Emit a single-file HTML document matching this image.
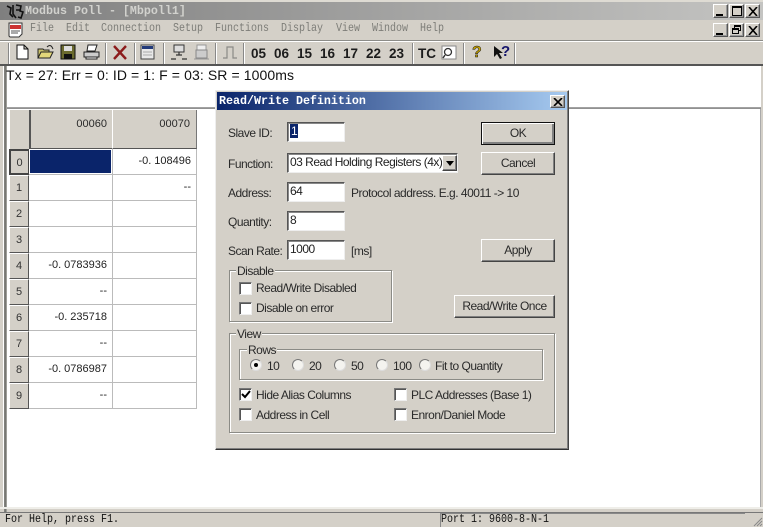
<!DOCTYPE html>
<html><head><meta charset="utf-8"><style>
html,body{margin:0;padding:0;width:763px;height:527px;overflow:hidden;background:#d4d0c8}
body{position:relative;font-family:"Liberation Sans",sans-serif;font-size:12px;color:#2a2a2a}
#w{position:absolute;left:0;top:0;width:763px;height:527px;filter:blur(.3px);letter-spacing:-.5px}
#w div,#w svg{position:absolute;box-sizing:border-box}
.t{white-space:nowrap;line-height:14px}
.m{font-family:"Liberation Mono",monospace;font-size:10px;color:#7d7d78;top:23px;line-height:14px;white-space:nowrap;letter-spacing:0;transform:scaleY(1.2)}
.btn{background:#d4d0c8;border:1px solid;border-color:#fff #444 #444 #fff;box-shadow:inset -1px -1px 0 #808080;text-align:center}
.wb{width:15px;height:14px;background:#d4d0c8;border:1px solid;border-color:#fff #555 #555 #fff;box-shadow:inset -1px -1px 0 #999}
.in{background:#fff;border:1px solid;border-color:#555 #eee #eee #555;box-shadow:inset 1px 1px 0 #888;left:287px;width:58px;height:20px;padding:1px 0 0 2px;line-height:15px;color:#222;white-space:nowrap;overflow:hidden}
.cb{width:13px;height:13px;background:#fff;border:1px solid;border-color:#777 #eee #eee #777;box-shadow:inset 1px 1px 0 #555}
.rd{width:12px;height:12px;border-radius:50%;background:#f4f3ef;border:1px solid;border-color:#777 #ddd #ddd #777;top:359px}
.g{border:1px solid #8b8b86;box-shadow:1px 1px 0 #fff,inset 1px 1px 0 #fff}
.lg{background:#d4d0c8;padding:0 1px;line-height:12px;white-space:nowrap}
.c{background:#fff;border-right:1px solid #bbb;border-bottom:1px solid #bbb;text-align:right;font-size:11px;line-height:25px;color:#222;padding-right:5px;letter-spacing:0}
.h{background:#d4d0c8;left:9px;width:20px;text-align:center;font-size:11px;line-height:25px;height:26px;border-bottom:1px solid #555;border-right:1px solid #555;border-top:1px solid #fff;border-left:1px solid #fff;color:#333;letter-spacing:0}
.sep{width:2px;top:43px;height:21px;border-left:1px solid #888;border-right:1px solid #fff}
.n{font-weight:bold;font-size:13.5px;top:46px;line-height:15px;color:#1c1c1c;letter-spacing:0}
.d{letter-spacing:3px}
</style></head><body><div id="w">

<div style="left:0;top:0;width:763px;height:2px;background:#dedbd3"></div>
<div style="left:0;top:2px;width:763px;height:18px;background:linear-gradient(90deg,#7f7f7f,#c4c4c2)"></div>
<svg style="left:5px;top:3px" width="20" height="17" viewBox="0 0 20 17"><path d="M2 3l4 2-1 6 3 3M8 2v9l3 4M11 2l5 1-1 5 3 1-2 6-3-1M11 7h4" fill="none" stroke="#111" stroke-width="1.6"/></svg>
<div class="t" style="left:25px;top:3px;font:bold 11.67px/16px 'Liberation Mono',monospace;color:#d2d2ce;letter-spacing:0">Modbus Poll - [Mbpoll1]</div>
<div class="wb" style="left:713px;top:4px"><div style="left:2px;top:9px;width:7px;height:2px;background:#000"></div></div>
<div class="wb" style="left:729px;top:4px"><div style="left:2px;top:1px;width:10px;height:10px;border:1px solid #000;border-top-width:2px"></div></div>
<div class="wb" style="left:745px;top:4px"><svg style="left:2px;top:2px" width="10" height="9"><path d="M1 0l8 9M9 0L1 9" stroke="#000" stroke-width="1.6"/></svg></div>

<svg style="left:8px;top:22px" width="16" height="16"><path d="M1 1h13v11l-3 3H2l-1-1z" fill="#fff" stroke="#333"/><rect x="2" y="3" width="11" height="4" fill="#c33"/><path d="M3 9h9M3 11h7" stroke="#555"/></svg>
<div class="m" style="left:30px">File</div><div class="m" style="left:66px">Edit</div><div class="m" style="left:101px">Connection</div><div class="m" style="left:173px">Setup</div><div class="m" style="left:215px">Functions</div><div class="m" style="left:281px">Display</div><div class="m" style="left:336px">View</div><div class="m" style="left:372px">Window</div><div class="m" style="left:420px">Help</div>
<div class="wb" style="left:713px;top:23px"><div style="left:2px;top:9px;width:7px;height:2px;background:#000"></div></div>
<div class="wb" style="left:729px;top:23px"><div style="left:4px;top:1px;width:7px;height:6px;border:1px solid #000;border-top-width:2px"></div><div style="left:2px;top:4px;width:7px;height:6px;border:1px solid #000;border-top-width:2px;background:#d4d0c8"></div></div>
<div class="wb" style="left:745px;top:23px"><svg style="left:2px;top:2px" width="10" height="9"><path d="M1 0l8 9M9 0L1 9" stroke="#000" stroke-width="1.6"/></svg></div>

<div style="left:0;top:40px;width:763px;height:1px;background:#8c8c88"></div>
<div style="left:0;top:41px;width:763px;height:1px;background:#fff"></div>
<div class="sep" style="left:8px"></div>
<svg style="left:15px;top:44px" width="15" height="16"><path d="M2 1h7l4 4v10H2z M9 1v4h4" fill="#fff" stroke="#111"/></svg>
<svg style="left:37px;top:44px" width="18" height="16"><path d="M1 14V5h5l1 1h5v2" fill="#c9c06a" stroke="#222"/><path d="M1 14l3-6h12l-3 6z" fill="#e3d77a" stroke="#222"/><path d="M10 3q3-3 5 0l1 2" fill="none" stroke="#222"/></svg>
<svg style="left:60px;top:44px" width="16" height="16"><rect x="1" y="1" width="14" height="14" fill="#6b6b2e" stroke="#111"/><rect x="4" y="2" width="8" height="5" fill="#ddd"/><rect x="4" y="10" width="8" height="5" fill="#111"/></svg>
<svg style="left:83px;top:44px" width="17" height="16"><path d="M5 1h9l-2 6H4z" fill="#fff" stroke="#222"/><path d="M1 8h15v5H1z" fill="#ccc" stroke="#222"/><path d="M3 13h11v2H3z" fill="#fff" stroke="#222"/></svg>
<div class="sep" style="left:105px"></div>
<svg style="left:112px;top:45px" width="16" height="15"><path d="M2 1l12 13M14 1L2 14" stroke="#8c1c1c" stroke-width="2.4"/></svg>
<div class="sep" style="left:134px"></div>
<svg style="left:140px;top:44px" width="15" height="16"><rect x="1" y="1" width="13" height="14" fill="#e8e8e8" stroke="#444"/><rect x="2" y="2" width="11" height="3" fill="#223a7a"/><path d="M3 8h9M3 11h9" stroke="#aaa"/></svg>
<div class="sep" style="left:163px"></div>
<svg style="left:170px;top:44px" width="18" height="17"><rect x="4" y="1" width="10" height="7" fill="#ddd" stroke="#333"/><path d="M6 11h6M9 8v3M1 15h5M12 15h5" stroke="#333" stroke-width="1.2"/></svg>
<svg style="left:193px;top:44px" width="17" height="17"><rect x="4" y="1" width="9" height="5" fill="#eee" stroke="#999"/><rect x="3" y="6" width="11" height="8" fill="#ccc" stroke="#888"/><path d="M1 15h15" stroke="#999"/></svg>
<div class="sep" style="left:215px"></div>
<svg style="left:222px;top:45px" width="16" height="15"><path d="M1 13h4V2h6v11h4" fill="none" stroke="#8a8a86" stroke-width="1.2"/></svg>
<div class="sep" style="left:243px"></div>
<div class="n t" style="left:251px">05</div><div class="n t" style="left:274px">06</div><div class="n t" style="left:297px">15</div><div class="n t" style="left:320px">16</div><div class="n t" style="left:343px">17</div><div class="n t" style="left:366px">22</div><div class="n t" style="left:389px">23</div>
<div class="sep" style="left:412px"></div>
<div class="n t" style="left:418px">TC</div>
<svg style="left:441px;top:45px" width="16" height="16"><rect x="1" y="1" width="14" height="13" fill="#fff" stroke="#888"/><circle cx="7" cy="7" r="3.5" fill="none" stroke="#333" stroke-width="1.3"/><path d="M4 10l-2 3" stroke="#333" stroke-width="1.5"/></svg>
<div class="sep" style="left:463px"></div>
<div class="t" style="left:472px;top:44px;font:bold 16px/18px 'Liberation Sans',sans-serif;color:#c9a400;-webkit-text-stroke:.5px #111">?</div>
<svg style="left:493px;top:45px" width="10" height="15"><path d="M1 1v11l3-3 3 5 2-1-3-5h4z" fill="#111"/></svg>
<div class="t" style="left:501px;top:44px;font:bold 15px/16px 'Liberation Sans',sans-serif;color:#15156b">?</div>
<div class="sep" style="left:514px"></div>
<div style="left:0;top:64px;width:763px;height:2px;background:#555"></div>

<div style="left:3px;top:66px;width:758px;height:441px;background:#fff"></div>
<div style="left:4px;top:66px;width:3px;height:447px;background:linear-gradient(90deg,#8a8a86,#6f6f6b,#b5b5b0)"></div>
<div style="left:760px;top:109px;width:1px;height:398px;background:#aaa"></div>
<div style="left:7px;top:107px;width:754px;height:2px;background:linear-gradient(#aaa,#888)"></div>
<div class="t" style="left:6px;top:67px;font-size:14px;line-height:16px;color:#111;letter-spacing:.1px">Tx = 27: Err = 0: ID = 1: F = 03: SR = 1000ms</div>

<div style="left:9px;top:110px;width:20px;height:39px;background:#d4d0c8;border-left:1px solid #fff"></div>
<div style="left:29px;top:110px;width:84px;height:39px;background:#d4d0c8;border-left:2px solid #555;border-bottom:1px solid #555;font-size:11px;text-align:right;padding:8px 5px 0 0;border-right:1px solid #fff;letter-spacing:0">00060</div>
<div style="left:113px;top:110px;width:84px;height:39px;background:#d4d0c8;border-bottom:1px solid #555;font-size:11px;text-align:right;padding:8px 6px 0 0;border-right:1px solid #777;letter-spacing:0">00070</div>

<div class="h" style="top:149px;border:2px solid #444;border-right-width:1px">0</div><div class="h" style="top:175px">1</div><div class="h" style="top:201px">2</div><div class="h" style="top:227px">3</div><div class="h" style="top:253px">4</div><div class="h" style="top:279px">5</div><div class="h" style="top:305px">6</div><div class="h" style="top:331px">7</div><div class="h" style="top:357px">8</div><div class="h" style="top:383px">9</div>

<div class="c" style="left:29px;top:149px;width:84px;height:26px"></div><div style="left:30px;top:150px;width:81px;height:23px;background:#0a246a"></div>
<div class="c" style="left:113px;top:149px;width:84px;height:26px">-0<span class="d">.</span>108496</div>
<div class="c" style="left:29px;top:175px;width:84px;height:26px"></div><div class="c" style="left:113px;top:175px;width:84px;height:26px">--</div>
<div class="c" style="left:29px;top:201px;width:84px;height:26px"></div><div class="c" style="left:113px;top:201px;width:84px;height:26px"></div>
<div class="c" style="left:29px;top:227px;width:84px;height:26px"></div><div class="c" style="left:113px;top:227px;width:84px;height:26px"></div>
<div class="c" style="left:29px;top:253px;width:84px;height:26px">-0<span class="d">.</span>0783936</div><div class="c" style="left:113px;top:253px;width:84px;height:26px"></div>
<div class="c" style="left:29px;top:279px;width:84px;height:26px">--</div><div class="c" style="left:113px;top:279px;width:84px;height:26px"></div>
<div class="c" style="left:29px;top:305px;width:84px;height:26px">-0<span class="d">.</span>235718</div><div class="c" style="left:113px;top:305px;width:84px;height:26px"></div>
<div class="c" style="left:29px;top:331px;width:84px;height:26px">--</div><div class="c" style="left:113px;top:331px;width:84px;height:26px"></div>
<div class="c" style="left:29px;top:357px;width:84px;height:26px">-0<span class="d">.</span>0786987</div><div class="c" style="left:113px;top:357px;width:84px;height:26px"></div>
<div class="c" style="left:29px;top:383px;width:84px;height:26px">--</div><div class="c" style="left:113px;top:383px;width:84px;height:26px"></div>

<!-- Dialog -->
<div style="left:215px;top:90px;width:354px;height:360px;background:#d4d0c8;border:1px solid;border-color:#eee #444 #333 #eee;box-shadow:inset -1px -1px 0 #808080"></div>
<div style="left:217px;top:92px;width:350px;height:18px;background:linear-gradient(90deg,#0a246a,#a6caf0)"></div>
<div class="t" style="left:219px;top:93px;font:bold 11.67px/16px 'Liberation Mono',monospace;color:#fff;letter-spacing:0">Read/Write Definition</div>
<div class="wb" style="left:550px;top:95px;width:15px;height:13px"><svg style="left:2px;top:2px" width="10" height="8"><path d="M1 0l8 8M9 0L1 8" stroke="#000" stroke-width="1.6"/></svg></div>

<div class="t" style="left:228px;top:126px">Slave ID:</div>
<div class="t" style="left:228px;top:157px">Function:</div>
<div class="t" style="left:228px;top:186px">Address:</div>
<div class="t" style="left:228px;top:215px">Quantity:</div>
<div class="t" style="left:228px;top:244px">Scan Rate:</div>

<div class="in" style="top:122px"><span style="background:#0a246a;color:#fff;padding:0 1px">1</span></div>
<div class="in" style="top:153px;width:171px">03 Read Holding Registers (4x)</div>
<div class="btn" style="left:442px;top:155px;width:15px;height:16px"><svg style="left:3px;top:5px" width="9" height="5"><path d="M0 0h8L4 5z" fill="#000"/></svg></div>
<div class="in" style="top:182px">64</div>
<div class="in" style="top:211px">8</div>
<div class="in" style="top:240px">1000</div>
<div class="t" style="left:351px;top:186px">Protocol address. E.g. 40011 -&gt; 10</div>
<div class="t" style="left:351px;top:244px">[ms]</div>

<div class="btn" style="left:481px;top:122px;width:74px;height:23px;border:1px solid #111;box-shadow:inset 1px 1px 0 #fff,inset -2px -2px 0 #808080;line-height:21px">OK</div>
<div class="btn" style="left:481px;top:152px;width:74px;height:23px;line-height:20px">Cancel</div>
<div class="btn" style="left:481px;top:239px;width:74px;height:23px;line-height:21px">Apply</div>
<div class="btn" style="left:454px;top:295px;width:101px;height:23px;line-height:20px">Read/Write Once</div>

<div class="g" style="left:229px;top:270px;width:163px;height:52px"></div>
<div class="lg" style="left:236px;top:265px">Disable</div>
<div class="cb" style="left:239px;top:282px"></div><div class="t" style="left:256px;top:281px">Read/Write Disabled</div>
<div class="cb" style="left:239px;top:302px"></div><div class="t" style="left:256px;top:301px">Disable on error</div>

<div class="g" style="left:229px;top:333px;width:326px;height:100px"></div>
<div class="lg" style="left:236px;top:328px">View</div>
<div class="g" style="left:239px;top:349px;width:304px;height:31px"></div>
<div class="lg" style="left:247px;top:344px">Rows</div>
<div class="rd" style="left:250px"><div style="left:3px;top:3px;width:4px;height:4px;border-radius:50%;background:#000"></div></div><div class="t" style="left:267px;top:359px">10</div>
<div class="rd" style="left:292px"></div><div class="t" style="left:309px;top:359px">20</div>
<div class="rd" style="left:334px"></div><div class="t" style="left:351px;top:359px">50</div>
<div class="rd" style="left:376px"></div><div class="t" style="left:393px;top:359px">100</div>
<div class="rd" style="left:419px"></div><div class="t" style="left:435px;top:359px">Fit to Quantity</div>

<div class="cb" style="left:239px;top:388px"><svg style="left:1px;top:1px" width="10" height="10"><path d="M1 4l3 3 5-6" fill="none" stroke="#000" stroke-width="2"/></svg></div><div class="t" style="left:256px;top:388px">Hide Alias Columns</div>
<div class="cb" style="left:239px;top:408px"></div><div class="t" style="left:256px;top:408px">Address in Cell</div>
<div class="cb" style="left:394px;top:388px"></div><div class="t" style="left:411px;top:388px">PLC Addresses (Base 1)</div>
<div class="cb" style="left:394px;top:408px"></div><div class="t" style="left:411px;top:408px">Enron/Daniel Mode</div>

<!-- status bar -->
<div style="left:0;top:507px;width:763px;height:2px;background:#efeee9"></div>
<div style="left:0;top:512px;width:763px;height:1px;background:#777"></div>
<div class="t" style="left:5px;top:514px;font:10px/14px 'Liberation Mono',monospace;color:#111;letter-spacing:0;transform:scaleY(1.15)">For Help, press F1.</div>
<div style="left:440px;top:513px;width:305px;height:14px;border-left:1px solid #888;border-top:1px solid #888"></div>
<div class="t" style="left:441px;top:514px;font:10px/14px 'Liberation Mono',monospace;color:#111;letter-spacing:0;transform:scaleY(1.15)">Port 1: 9600-8-N-1</div>
<svg style="left:752px;top:516px" width="11" height="11"><path d="M10 2L2 10M10 5L5 10M10 8L8 10" stroke="#888"/></svg>
</div></body></html>
